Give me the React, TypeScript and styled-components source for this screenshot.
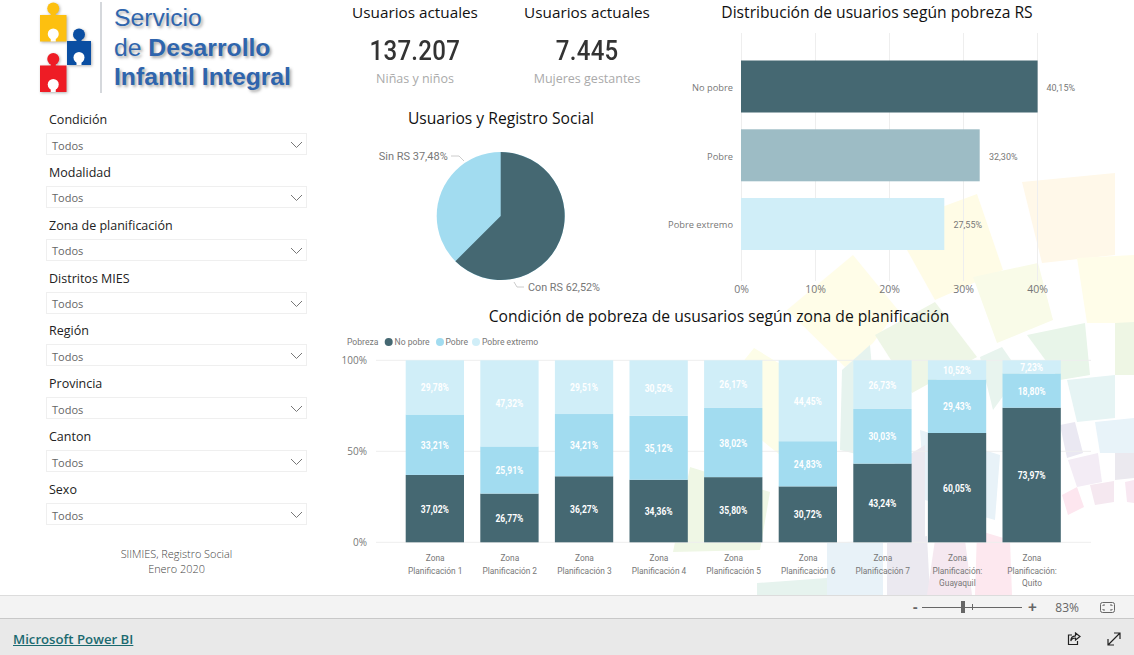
import React from 'react';
import styled, { createGlobalStyle } from 'styled-components';

const UI_FONT = '"Open Sans", "Noto Sans", sans-serif';
const DATA_FONT = 'Roboto, "Liberation Sans", sans-serif';

const DARK = '#456872';
const MID = '#a2dcf0';
const LIGHT = '#d0eef8';

const GlobalStyle = createGlobalStyle`
  html, body {
    margin: 0;
    padding: 0;
    height: 100%;
    background: #fff;
    overflow: hidden;
  }
  #root {
    height: 100%;
  }
`;

const Page = styled.div`
  display: flex;
  flex-direction: column;
  width: 1134px;
  height: 655px;
  overflow: hidden;
  font-family: ${UI_FONT};
`;

const Report = styled.main`
  position: relative;
  display: grid;
  grid-template-columns: 329px 805px;
  height: 595px;
  background: #fff;
`;

const Backdrop = styled.svg`
  position: absolute;
  top: 0;
  left: 0;
  width: 1134px;
  height: 595px;
`;

const Sidebar = styled.aside`
  position: relative;
  display: flex;
  flex-direction: column;
`;

const Logo = styled.div`
  display: flex;
  height: 107px;
  padding-left: 36px;
  box-sizing: border-box;
`;

const LogoPieces = styled.svg`
  filter: drop-shadow(1px 1px 1.5px rgba(0, 0, 0, 0.3));
`;

const LogoDivider = styled.div`
  width: 2px;
  height: 91px;
  margin: 2px 12px 0 7px;
  background: #d5d8dc;
`;

const LogoText = styled.div`
  display: flex;
  flex-direction: column;
  font-family: 'Liberation Sans', Arial, sans-serif;
  font-size: 24.7px;
  line-height: 29.5px;
  color: #2f65ad;
  text-shadow: 2px 2px 3px rgba(70, 70, 70, 0.45);
  white-space: nowrap;
  padding-top: 3px;
`;

const LogoBold = styled.span`
  font-weight: 700;
`;

const Slicers = styled.div`
  display: grid;
  grid-auto-rows: 52.86px;
  width: 261px;
  margin-left: 46px;
`;

const SlicerLabel = styled.div`
  height: 26px;
  line-height: 25px;
  padding-left: 3px;
  font-size: 12.5px;
  color: #222;
`;

const SlicerBox = styled.div`
  display: flex;
  align-items: center;
  justify-content: space-between;
  height: 22px;
  box-sizing: border-box;
  padding: 2px 3px 0 5px;
  border: 1px solid #efefef;
  background: #fff;
  font-size: 11px;
  color: #666;
`;

const Note = styled.div`
  width: 261px;
  margin: 16.500px 0 0 46px;
  font-size: 10.900px;
  font-weight: 300;
  line-height: 15px;
  text-align: center;
  color: #444;
`;

const Content = styled.div`
  position: relative;
  display: flex;
  flex-direction: column;
`;

const TopRow = styled.div`
  display: flex;
  height: 300px;
`;

const MiddleColumn = styled.div`
  display: flex;
  flex-direction: column;
  width: 344px;
`;

const KpiRow = styled.div`
  display: grid;
  grid-template-columns: 172px 172px;
  height: 106px;
`;

const Kpi = styled.div`
  display: flex;
  flex-direction: column;
  align-items: center;
`;

const Title = styled.div<{ $width?: number; $size?: number }>`
  width: ${(props) => (props.$width ? `${props.$width}px` : 'auto')};
  height: 24px;
  line-height: 24px;
  font-size: ${(props) => props.$size ?? 15.65}px;
  color: #111;
  text-align: center;
  white-space: nowrap;
`;

const KpiValue = styled.div`
  margin-top: 11px;
  height: 32px;
  line-height: 32px;
  font-family: ${DATA_FONT};
  font-size: 27px;
  font-weight: 500;
  letter-spacing: 0.3px;
  color: #333;
  transform: scaleX(0.89);
`;

const KpiCaption = styled.div`
  margin-top: 3px;
  height: 18px;
  line-height: 18px;
  font-size: 12.5px;
  color: #aaa;
`;

const BarPanel = styled.div`
  display: flex;
  flex-direction: column;
  gap: 4px;
`;

const ChartSvg = styled.svg`
  display: block;
  overflow: visible;
`;

const StackPanel = styled.div`
  display: flex;
  flex-direction: column;
  gap: 2px;
  padding-top: 4px;
`;

const AxisText = styled.text<{ $size?: number }>`
  font-family: ${UI_FONT};
  font-size: ${(props) => props.$size ?? 10}px;
  fill: #777;
`;

const DataText = styled.text<{ $size?: number }>`
  font-family: ${DATA_FONT};
  font-size: ${(props) => props.$size ?? 10}px;
  fill: #777;
`;

const BarValue = styled.text`
  font-family: ${DATA_FONT};
  font-size: 10.500px;
  font-weight: 700;
  fill: #fff;
`;

const StatusBar = styled.div`
  display: flex;
  align-items: center;
  justify-content: flex-end;
  height: 24px;
  box-sizing: border-box;
  padding-right: 19px;
  background: #f3f3f3;
  border-top: 1px solid #dcdcdc;
  border-bottom: 1px solid #c8c8c8;
  color: #666;
`;

const ZoomSign = styled.span`
  width: 14px;
  font-size: 15px;
  font-weight: 700;
  line-height: 20px;
  text-align: center;
  font-family: 'Liberation Sans', sans-serif;
`;

const ZoomTrack = styled.div`
  position: relative;
  width: 100px;
  height: 1px;
  margin: 0 3px 0 0;
  background: #666;
`;

const ZoomThumb = styled.div`
  position: absolute;
  left: 39px;
  top: -6px;
  width: 4px;
  height: 12px;
  background: #666;
`;

const ZoomTick = styled.div`
  position: absolute;
  left: 50px;
  top: -3px;
  width: 1px;
  height: 6px;
  background: #666;
`;

const ZoomPercent = styled.span`
  margin: 0 21px 0 16px;
  font-size: 12px;
`;

const Footer = styled.footer`
  display: flex;
  align-items: center;
  height: 36px;
  box-sizing: border-box;
  padding: 3px 13px 0 13px;
  background: #e9e9e9;
`;

const PowerBiLink = styled.a`
  font-size: 13.200px;
  font-weight: 600;
  color: #1b6a70;
  text-decoration: underline;
`;

const FooterIcons = styled.div`
  display: flex;
  align-items: center;
  gap: 26px;
  margin-left: auto;
`;

const SLICERS = ['Condición', 'Modalidad', 'Zona de planificación', 'Distritos MIES', 'Región', 'Provincia', 'Canton', 'Sexo'];

const POVERTY_BARS = [
  { label: 'No pobre', value: '40,15%', end: 1037.6, top: 60.5, color: '#456872', valueX: 1046.5, textY: 87.5 },
  { label: 'Pobre', value: '32,30%', end: 979.7, top: 129.3, color: '#9dbcc5', valueX: 989, textY: 156 },
  { label: 'Pobre extremo', value: '27,55%', end: 944.3, top: 198, color: '#d0eef8', valueX: 953.5, textY: 224.5 },
];

const ZONES = [
  { lines: ['Zona', 'Planificación 1'], values: [37.02, 33.21, 29.78] },
  { lines: ['Zona', 'Planificación 2'], values: [26.77, 25.91, 47.32] },
  { lines: ['Zona', 'Planificación 3'], values: [36.27, 34.21, 29.51] },
  { lines: ['Zona', 'Planificación 4'], values: [34.36, 35.12, 30.52] },
  { lines: ['Zona', 'Planificación 5'], values: [35.8, 38.02, 26.17] },
  { lines: ['Zona', 'Planificación 6'], values: [30.72, 24.83, 44.45] },
  { lines: ['Zona', 'Planificación 7'], values: [43.24, 30.03, 26.73] },
  { lines: ['Zona', 'Planificación:', 'Guayaquil'], values: [60.05, 29.43, 10.52] },
  { lines: ['Zona', 'Planificación:', 'Quito'], values: [73.97, 18.8, 7.23] },
];

// pale tiles of the report wallpaper: [colour, points]
const TILES: [string, string][] = [
  ['#fff8e9', '1022,182 1115,173 1115,255 1042,263'],
  ['#fffce6', '977,194 1003,270 935,300 893,225'],
  ['#fffde8', '853,255 898,310 873,343 845,367 787,310'],
  ['#fffde9', '1077,258 1134,255 1134,323 1087,323'],
  ['#f9fbe8', '973,277 1038,263 1053,320 997,343'],
  ['#eef6e6', '875,335 935,302 977,357 912,393'],
  ['#e8f5e9', '1027,335 1085,323 1090,375 1060,380'],
  ['#eef6e4', '1115,323 1134,322 1134,375 1115,375'],
  ['#e8f4ee', '980,357 1002,347 1020,373 993,410'],
  ['#e6f4f4', '1067,380 1115,375 1115,418 1077,422'],
  ['#e8f3f9', '1095,422 1134,418 1134,453 1100,453'],
  ['#eae8f2', '1060,425 1075,422 1083,453 1067,458'],
  ['#f3ecf5', '1068,460 1098,453 1102,482 1077,487'],
  ['#ebe9ef', '1115,453 1134,453 1134,478 1115,480'],
  ['#fde6ef', '1062,495 1077,487 1084,507 1068,515'],
  ['#f5e8f0', '1090,485 1114,481 1114,502 1095,505'],
  ['#f8e8f2', '1125,482 1134,480 1134,503 1127,502'],
  ['#fdfde8', '754,348 790,370 780,455 712,400'],
  ['#eff7e5', '690,467 770,492 760,550 673,552'],
  ['#e6f3ee', '842,370 870,345 880,460 840,450'],
  ['#e8f2f8', '827,543 883,540 883,595 827,595'],
  ['#e6f3ee', '757,583 827,578 827,595 757,595'],
  ['#ebe9f0', '887,543 927,536 930,595 887,595'],
  ['#f5e8f0', '935,540 965,540 972,595 927,595'],
  ['#fde8ef', '977,530 1010,540 1012,595 975,595'],
  ['#e8f2f8', '920,430 1000,455 995,520 925,500'],
  ['#ebe9f0', '868,480 925,445 925,540 868,540'],
];

const PuzzlePiece = ({ x, y, size, color }: { x: number; y: number; size: number; color: string }) => {
  const mid = x + size / 2;
  return (
    <g fill={color}>
      <rect x={x} y={y} width={size} height={size} />
      <rect x={mid - 2.5} y={y - 4} width="5" height="6" />
      <circle cx={mid} cy={y - 6.5} r="6" />
      <circle cx={mid} cy={y + size - 7.5} r="5.500" fill="#fff" />
      <rect x={mid - 2.5} y={y + size - 5} width="5" height="5" fill="#fff" />
    </g>
  );
};

const ChevronDown = () => (
  <svg width="13" height="8" viewBox="0 0 13 8" fill="none" stroke="#777" strokeWidth="1">
    <path d="M1 1l5.500 5.500L12 1" />
  </svg>
);

const FitIcon = () => (
  <svg width="15" height="11" viewBox="0 0 15 11" fill="none" stroke="#666" strokeWidth="1">
    <rect x="0.500" y="0.500" width="14" height="10" rx="2" />
    <path d="M3 4V3h2M10 3h2v1M12 7v1h-2M5 8H3V7" />
  </svg>
);

const ShareIcon = () => (
  <svg width="14" height="14" viewBox="0 0 14 14" fill="none" stroke="#222" strokeWidth="1.200">
    <path d="M5 3H1.500v9.500h9V9" />
    <path d="M8.500 1l4.500 3.500-4.500 3.500V6C6 6 4.500 7 3.800 9c0-3 1.500-5 4.700-5.200z" />
  </svg>
);

const ExpandIcon = () => (
  <svg width="14" height="14" viewBox="0 0 14 14" fill="none" stroke="#222" strokeWidth="1.200">
    <path d="M1 13L13 1M7 1h6v6M1 7v6h6" />
  </svg>
);

const PieChart = () => {
  const cx = 500.7;
  const cy = 216;
  const r = 64;
  const angle = 2 * Math.PI * 0.6252;
  const ex = cx + r * Math.sin(angle);
  const ey = cy - r * Math.cos(angle);
  return (
    <ChartSvg width="344" height="170" viewBox="329 130 344 170">
      <circle cx={cx} cy={cy} r={r} fill={MID} />
      <path d={`M${cx} ${cy}L${cx} ${cy - r}A${r} ${r} 0 1 1 ${ex} ${ey}Z`} fill={DARK} />
      <path d="M451 156h8l5 5M514 282l3 5h7" fill="none" stroke="#ccc" />
      <DataText $size={11} x="378.700" y="160" textLength="69" lengthAdjust="spacingAndGlyphs">Sin RS 37,48%</DataText>
      <DataText $size={11} x="528" y="291" textLength="72" lengthAdjust="spacingAndGlyphs">Con RS 62,52%</DataText>
    </ChartSvg>
  );
};

const PovertyChart = () => (
  <ChartSvg width="461" height="272" viewBox="673 28 461 272">
    {[0, 10, 20, 30, 40].map((tick, i) => (
      <g key={tick}>
        <line x1={741.5 + i * 74} x2={741.5 + i * 74} y1="33" y2="281" stroke="#eee" />
        <AxisText $size={10.5} x={741.5 + i * 74} y="293" textAnchor="middle">{`${tick}%`}</AxisText>
      </g>
    ))}
    {POVERTY_BARS.map((bar) => (
      <g key={bar.label}>
        <rect x="741" y={bar.top} width={bar.end - 741} height="52" fill={bar.color} />
        <AxisText $size={9.3} x="733" y={bar.textY + 3.5} textAnchor="end">{bar.label}</AxisText>
        <DataText $size={9.5} x={bar.valueX} y={bar.textY + 3.5} textLength="28.500" lengthAdjust="spacingAndGlyphs">
          {bar.value}
        </DataText>
      </g>
    ))}
  </ChartSvg>
);

const ZoneChart = () => {
  const plotTop = 360.3;
  const plotHeight = 182;
  return (
    <ChartSvg width="805" height="266" viewBox="329 330 805 266">
      <DataText $size={8.6} x="347" y="345">Pobreza</DataText>
      <circle cx="388.700" cy="342" r="4" fill={DARK} />
      <DataText $size={8.6} x="394.500" y="345">No pobre</DataText>
      <circle cx="440" cy="342" r="4" fill={MID} />
      <DataText $size={8.6} x="445.500" y="345">Pobre</DataText>
      <circle cx="476" cy="342" r="4" fill={LIGHT} />
      <DataText $size={8.6} x="482" y="345">Pobre extremo</DataText>
      {[100, 50, 0].map((tick, i) => (
        <g key={tick}>
          <line x1="376" x2="1091" y1={plotTop + i * 91} y2={plotTop + i * 91} stroke="#eee" />
          <AxisText $size={10} x="367" y={plotTop + i * 91 + 3.5} textAnchor="end">{`${tick}%`}</AxisText>
        </g>
      ))}
      {ZONES.map((zone, i) => {
        const x = 405.7 + i * 74.6;
        const [dark, mid, light] = zone.values;
        const darkTop = plotTop + plotHeight * (1 - dark / 100);
        const midTop = darkTop - (plotHeight * mid) / 100;
        const segments = [
          { y: darkTop, h: (plotHeight * dark) / 100, fill: DARK, value: dark },
          { y: midTop, h: (plotHeight * mid) / 100, fill: MID, value: mid },
          { y: plotTop, h: midTop - plotTop, fill: LIGHT, value: light },
        ];
        return (
          <g key={zone.lines.join()}>
            {segments.map((segment) => (
              <g key={segment.fill}>
                <rect x={x} y={segment.y} width="58.300" height={segment.h} fill={segment.fill} />
                <BarValue
                  x={x + 29.15}
                  y={segment.y + segment.h / 2 + 4}
                  textAnchor="middle"
                  textLength={segment.value < 10 ? 23 : 28}
                  lengthAdjust="spacingAndGlyphs"
                >
                  {`${segment.value.toFixed(2).replace('.', ',')}%`}
                </BarValue>
              </g>
            ))}
            {zone.lines.map((line, n) => (
              <DataText
                key={line}
                $size={9.6}
                transform={`translate(${x + 29.5} ${561 + n * 12.5}) scale(0.87 1)`}
                textAnchor="middle"
              >
                {line}
              </DataText>
            ))}
          </g>
        );
      })}
    </ChartSvg>
  );
};

const App = () => (
  <Page>
    <GlobalStyle />
    <Report>
      <Backdrop viewBox="0 0 1134 595">
        {TILES.map(([color, points]) => (
          <polygon key={points} points={points} fill={color} />
        ))}
      </Backdrop>
      <Sidebar>
        <Logo>
          <LogoPieces width="57" height="96" viewBox="36 0 57 96">
            <PuzzlePiece x={40} y={15} size={26.5} color="#fdc010" />
            <PuzzlePiece x={67} y={41} size={24} color="#0a4ea2" />
            <PuzzlePiece x={40} y={65.500} size={26.5} color="#ee1c25" />
          </LogoPieces>
          <LogoDivider />
          <LogoText>
            <span>Servicio</span>
            <span>de <LogoBold>Desarrollo</LogoBold></span>
            <LogoBold>Infantil Integral</LogoBold>
          </LogoText>
        </Logo>
        <Slicers>
          {SLICERS.map((name) => (
            <div key={name}>
              <SlicerLabel>{name}</SlicerLabel>
              <SlicerBox>
                Todos
                <ChevronDown />
              </SlicerBox>
            </div>
          ))}
        </Slicers>
        <Note>
          SIIMIES, Registro Social
          <br />
          Enero 2020
        </Note>
      </Sidebar>
      <Content>
        <TopRow>
          <MiddleColumn>
            <KpiRow>
              <Kpi>
                <Title $size={15.3}>Usuarios actuales</Title>
                <KpiValue>137.207</KpiValue>
                <KpiCaption>Niñas y niños</KpiCaption>
              </Kpi>
              <Kpi>
                <Title $size={15.3}>Usuarios actuales</Title>
                <KpiValue>7.445</KpiValue>
                <KpiCaption>Mujeres gestantes</KpiCaption>
              </Kpi>
            </KpiRow>
            <Title>Usuarios y Registro Social</Title>
            <PieChart />
          </MiddleColumn>
          <BarPanel>
            <Title $width={408}>Distribución de usuarios según pobreza RS</Title>
            <PovertyChart />
          </BarPanel>
        </TopRow>
        <StackPanel>
          <Title $width={780}>Condición de pobreza de ususarios según zona de planificación</Title>
          <ZoneChart />
        </StackPanel>
      </Content>
    </Report>
    <StatusBar>
      <ZoomSign>-</ZoomSign>
      <ZoomTrack>
        <ZoomThumb />
        <ZoomTick />
      </ZoomTrack>
      <ZoomSign>+</ZoomSign>
      <ZoomPercent>83%</ZoomPercent>
      <FitIcon />
    </StatusBar>
    <Footer>
      <PowerBiLink href="#">Microsoft Power BI</PowerBiLink>
      <FooterIcons>
        <ShareIcon />
        <ExpandIcon />
      </FooterIcons>
    </Footer>
  </Page>
);

export default App;
